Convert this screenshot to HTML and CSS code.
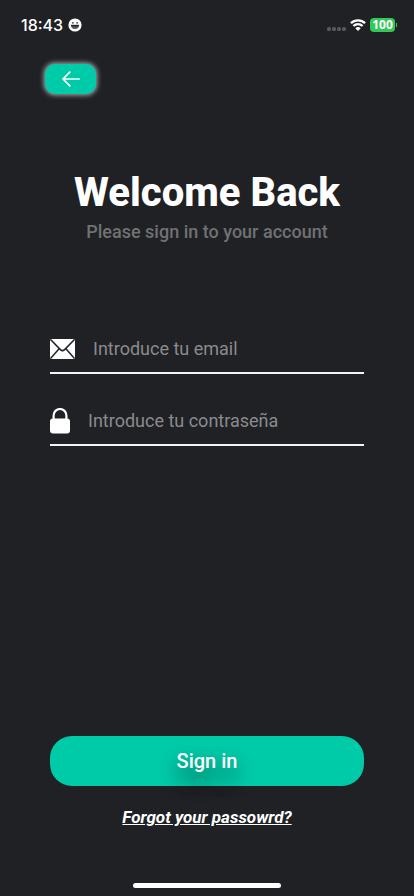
FILE: index.html
```html
<!DOCTYPE html>
<html lang="en">
<head>
<meta charset="utf-8">
<meta name="viewport" content="width=device-width, initial-scale=1">
<title>Sign in</title>
<link rel="stylesheet" href="styles.css">
</head>
<body>
<div class="screen">
  <div class="status">
    <div class="status-left">
      <span class="time">18:43</span>
      <svg class="face" width="14" height="14" viewBox="0 0 14 14" aria-hidden="true">
        <circle cx="7" cy="7" r="6.6" fill="#fff"/>
        <circle cx="4.9" cy="4.9" r=".8" fill="#202125"/>
        <circle cx="9.1" cy="4.9" r=".8" fill="#202125"/>
        <path d="M2.8 6.8h8.4c0 2.6-1.8 4.3-4.2 4.3S2.8 9.400 2.800 6.800z" fill="#55565a"/>
        <path d="M3.200 7.100h7.600l-.3 1.200h-7z" fill="#202125"/>
      </svg>
    </div>
    <div class="status-right">
      <svg width="19" height="4" viewBox="0 0 19 4" fill="#57585b" aria-hidden="true">
        <rect width="4" height="4" rx="1.6"/><rect x="5" width="4" height="4" rx="1.6"/><rect x="10" width="4" height="4" rx="1.6"/><rect x="15" width="4" height="4" rx="1.6"/>
      </svg>
      <svg class="wifi" width="16" height="12" viewBox="0 0 16 12" aria-hidden="true">
        <path d="M.9 4.200a10.200 10.200 0 0 1 14.200 0M3.400 7a6.600 6.600 0 0 1 9.200 0" fill="none" stroke="#fff" stroke-width="2.300"/>
        <path d="M8 12 5.300 9.300a3.800 3.800 0 0 1 5.400 0z" fill="#fff"/>
      </svg>
      <div class="battery"><span class="level">100</span><span class="tip"></span></div>
    </div>
  </div>

  <header class="nav">
    <button class="back" type="button" aria-label="Back">
      <svg width="18" height="16" viewBox="0 0 18 16" fill="none" stroke="#fff" stroke-width="1.7" stroke-linecap="round" stroke-linejoin="round" aria-hidden="true">
        <path d="M17.200 8H1M7.800 1.200 1 8l6.800 6.800"/>
      </svg>
    </button>
  </header>

  <main class="content">
    <h1 class="title">Welcome Back</h1>
    <p class="subtitle">Please sign in to your account</p>

    <form class="form">
      <div class="fields">
        <label class="field">
          <svg width="25" height="20" viewBox="0 0 25 20" aria-label="Email">
            <rect width="25" height="20" rx="1.6" fill="#fff"/>
            <path d="M.5.5 10.400 10.600Q12.500 12.600 14.600 10.600L24.500.5M.5 19.500l8.800-10M24.500 19.500l-8.800-10" fill="none" stroke="#202125" stroke-width="1.500"/>
          </svg>
          <input class="input" type="email" placeholder="Introduce tu email">
        </label>
        <label class="field">
          <svg width="20" height="26" viewBox="0 0 20 26" aria-label="Password">
            <path d="M3.600 12V7.400a6.400 6.400 0 0 1 12.800 0V12" fill="none" stroke="#fff" stroke-width="2.200"/>
            <rect y="10.500" width="20" height="15" rx="3" fill="#fff"/>
          </svg>
          <input class="input" type="password" placeholder="Introduce tu contraseña">
        </label>
      </div>
      <button class="submit" type="button">Sign in</button>
    </form>
    <a class="forgot" href="#">Forgot your passowrd?</a>
  </main>
  <div class="home"></div>
</div>
</body>
</html>
```
FILE: styles.css
```css
* { box-sizing: border-box; }
body {
  margin: 0;
  background: #202125;
  color: #fff;
  font-family: Roboto, "Liberation Sans", sans-serif;
}
.screen {
  min-height: 100vh;
  display: flex;
  flex-direction: column;
}
.status {
  height: 50px;
  padding: 0 17px 0 21px;
  display: flex;
  align-items: center;
  justify-content: space-between;
}
.status-left, .status-right { display: flex; align-items: center; }
.status-left { gap: 5px; }
.status-right { gap: 4px; }
.status-right > :first-child { margin-top: 8px; }
.time {
  font: 500 16px/20px Inter, sans-serif;
}
.battery { display: flex; align-items: center; gap: 1px; }
.level {
  width: 25px;
  height: 14px;
  border-radius: 4px;
  background: #34c759;
  font: 700 12px/14px "Open Sans", sans-serif;
  text-align: center;
}
.tip {
  width: 1px;
  height: 4px;
  background: #34c759;
}
.nav { padding: 14px 45px 0; }
.back {
  display: flex;
  align-items: center;
  justify-content: center;
  width: 51px;
  height: 30px;
  padding: 0;
  border: 0;
  border-radius: 10px;
  background: #00cba9;
  box-shadow: 0 0 5px 1px rgba(255, 255, 255, 0.65);
}
.content {
  flex: 1;
  display: flex;
  flex-direction: column;
  align-items: center;
  padding: 75px 50px 0;
}
.title {
  margin: 0;
  font-size: 40px;
  line-height: 48px;
  font-weight: 800;
}
.subtitle {
  margin: 4px 0 0;
  font-size: 18px;
  line-height: 22px;
  font-weight: 500;
  color: #707174;
}
.form {
  flex: 1;
  width: 100%;
  margin-top: 81px;
  display: flex;
  flex-direction: column;
  justify-content: space-between;
}
.fields { display: flex; flex-direction: column; gap: 22px; }
.field {
  display: flex;
  align-items: center;
  gap: 18px;
  height: 50px;
  padding-top: 2px;
  border-bottom: 2px solid #f4f4f4;
}
.field svg { flex: none; }
.input {
  flex: 1;
  min-width: 0;
  padding: 0;
  border: 0;
  outline: 0;
  background: none;
  color: #fff;
  font: 400 18px/24px Roboto, sans-serif;
}
.input::placeholder { color: #8a8b8d; opacity: 1; }
.submit {
  width: 100%;
  height: 50px;
  border: 0;
  border-radius: 22px;
  background: #00cba9;
  color: #fff;
  font: 500 20px/24px Roboto, sans-serif;
  text-shadow: 0 10px 20px rgba(0, 0, 0, 0.75);
}
.forgot {
  margin: 20px 0 55px;
  color: #fff;
  font-size: 17px;
  line-height: 22px;
  font-weight: 700;
  font-style: italic;
}
.home {
  width: 148px;
  height: 5px;
  margin: 0 auto 8px;
  border-radius: 3px;
  background: #fff;
}
```
